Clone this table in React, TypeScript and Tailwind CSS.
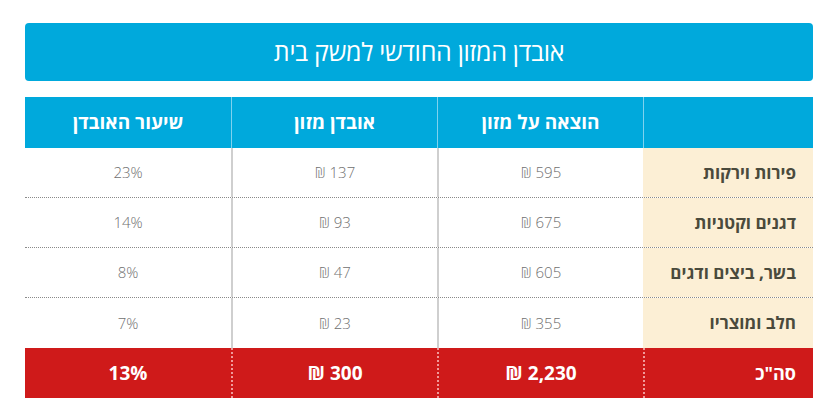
const rows = [
  { label: 'פירות וירקות', spend: '595 ₪', loss: '137 ₪', rate: '23%' },
  { label: 'דגנים וקטניות', spend: '675 ₪', loss: '93 ₪', rate: '14%' },
  { label: 'בשר, ביצים ודגים', spend: '605 ₪', loss: '47 ₪', rate: '8%' },
  { label: 'חלב ומוצריו', spend: '355 ₪', loss: '23 ₪', rate: '7%' },
]

const font = { fontFamily: '"Open Sans", "DejaVu Sans", sans-serif' }

export default function App() {
  return (
    <div className="w-[827px] h-[414px] bg-white pt-[23px] pl-[25px]" style={font}>
      <div className="w-[788px]" dir="rtl">
        <div className="h-[58px] rounded-[4px] bg-[#00a9dc] flex items-center justify-center text-white text-[25px] tracking-[-0.3px]">
          אובדן המזון החודשי למשק בית
        </div>

        <div className="mt-[16px]">
          {/* header */}
          <div className="grid grid-cols-[170px_206px_206px_206px] h-[51px] bg-[#00a9dc] text-white text-[19px] font-bold">
            <div className="border-l border-[#7fd2ee]"></div>
            <div className="flex items-center justify-center border-l border-[#7fd2ee]">הוצאה על מזון</div>
            <div className="flex items-center justify-center border-l border-[#7fd2ee]">אובדן מזון</div>
            <div className="flex items-center justify-center">שיעור האובדן</div>
          </div>

          {rows.map((r, i) => (
            <div
              key={r.label}
              className={`grid grid-cols-[170px_206px_206px_206px] h-[50px] ${i < rows.length - 1 ? 'border-b border-dotted border-[#8a8a8a]' : ''}`}
            >
              <div className="bg-[#fcefd5] flex items-center pr-[17px] text-[17px] font-bold text-[#4a4a3c]">{r.label}</div>
              <div className="flex items-center justify-center border-l-2 border-[#cfcfcf] text-[15px] font-light text-[#707070]">{r.spend}</div>
              <div className="flex items-center justify-center border-l-2 border-[#cfcfcf] text-[15px] font-light text-[#707070]">{r.loss}</div>
              <div className="flex items-center justify-center text-[15px] font-light text-[#707070]">{r.rate}</div>
            </div>
          ))}

          {/* total */}
          <div className="grid grid-cols-[170px_206px_206px_206px] h-[50px] bg-[#cf1a1a] text-white font-bold">
            <div className="flex items-center pr-[17px] text-[18px] border-l-2 border-dotted border-[#f09a9a]">סה"כ</div>
            <div className="flex items-center justify-center text-[19px] border-l-2 border-dotted border-[#f09a9a]">2,230 ₪</div>
            <div className="flex items-center justify-center text-[19px] border-l-2 border-dotted border-[#f09a9a]">300 ₪</div>
            <div className="flex items-center justify-center text-[19px]">13%</div>
          </div>
        </div>
      </div>
    </div>
  )
}
